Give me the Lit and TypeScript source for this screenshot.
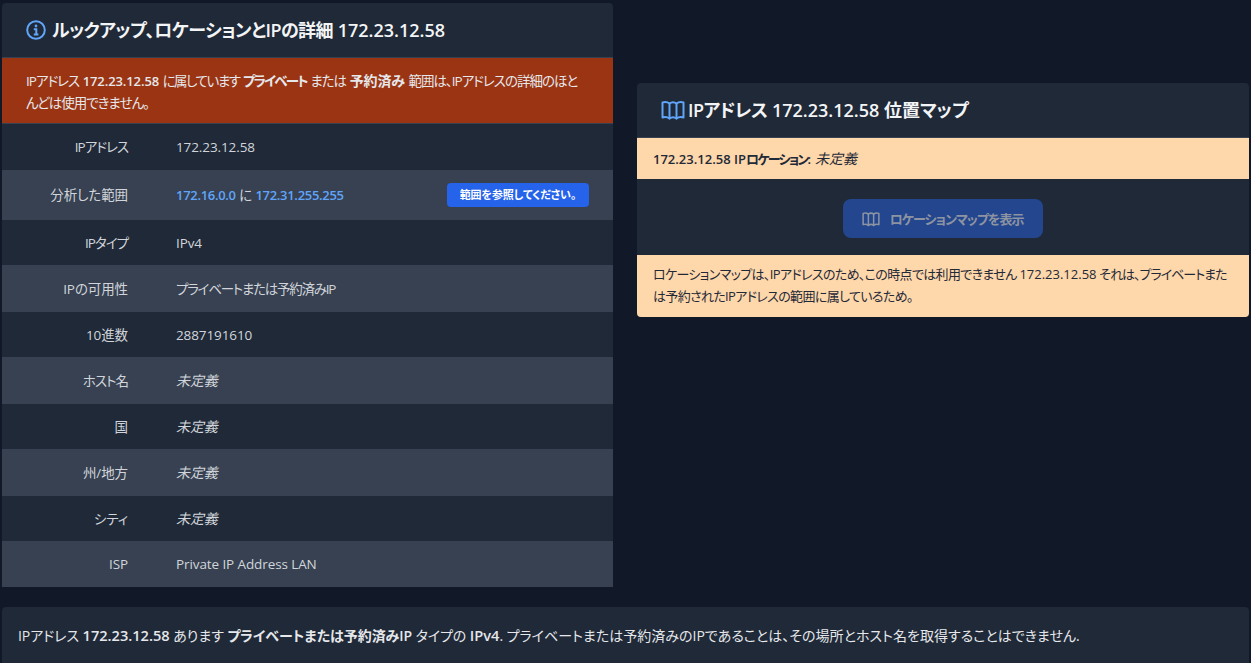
import { LitElement, html, css } from "lit";
import { customElement } from "lit/decorators.js";

const IP = "172.23.12.58";
const mapIcon = (cls: string) => html`<svg class=${cls} viewBox="0 0 24 24" fill="none" stroke="currentColor" stroke-width="2" stroke-linecap="round" stroke-linejoin="round"><path d="M8.500 5.500C6.500 4 4 3.800 1.500 4.500V19.500C4 18.800 6.500 19 8.500 20.500C10.500 19 13.500 19 15.500 20.500C17.500 19 20 18.800 22.500 19.500V4.500C20 3.800 17.500 4 15.500 5.500C13.500 4 10.500 4 8.500 5.500Z"/><path d="M8.500 5.500V20.500M15.500 5.500V20.500"/></svg>`;

@customElement("app-root")
export class AppRoot extends LitElement {
  static styles = css`
    :host { display: block; min-height: 663px; height: 663px; overflow: hidden; background: #111827; color: #e5e7eb;
      font-family: "Open Sans", "Noto Sans CJK JP", sans-serif; font-size: 14px; line-height: 20px; font-feature-settings: "palt"; }
    .page { display: flex; flex-direction: column; gap: 20px; padding: 3px 2px 0; }
    .cols { display: grid; grid-template-columns: 611px 612px; gap: 24px; align-items: start; }
    .card { background: #1f2937; border-radius: 4px; overflow: hidden; }
    .left { border-radius: 4px 4px 0 0; }
    .right { margin-top: 80px; }
    .head { display: flex; align-items: center; height: 55px; box-sizing: border-box; border-bottom: 1px solid #374151;
      font-size: 18px; font-weight: 600; color: #f3f4f6; white-space: nowrap; }
    .left .head { padding-left: 24px; gap: 6px; }
    .right .head { padding-left: 24px; gap: 3px; }
    .ico { width: 20px; height: 20px; color: #60a5fa; flex: none; }
    .mapico { width: 24px; height: 24px; color: #60a5fa; flex: none; }
    .kr { letter-spacing: -0.6px; }
    .k1 { letter-spacing: -1px; }
    .k12 { letter-spacing: -1.25px; }
    .k2 { letter-spacing: -1.5px; }
    .k3 { letter-spacing: -1.8px; }
    .kh { letter-spacing: -0.55px; }
    .n { letter-spacing: 0; }
    .alert { background: #9a3412; color: #e5e7eb; padding: 12px 24px; height: 66px; box-sizing: border-box; border-bottom: 1px solid #374151; font-size: 13.5px; line-height: 22px; white-space: nowrap; }
    .alert .n { font-size: 13px; letter-spacing: -0.1px; }
    .alert .kan { font-size: 14px; letter-spacing: -0.1px; }
    b { font-weight: 600; }
    .row { display: grid; grid-template-columns: 126px 1fr; column-gap: 48px; align-items: center; height: 45px; font-size: 13.5px; letter-spacing: -0.1px; }
    .row.alt { height: 47px; background: #374151; }
    .row.end { height: 46px; }
    .row.tall { height: 50px; }
    .label { text-align: right; color: #d1d5db; }
    .value { color: #d1d5db; display: flex; align-items: center; justify-content: space-between; padding-right: 24px; }
    .value i { font-style: italic; font-size: 14px; }
    .link { color: #60a5fa; font-weight: 600; font-size: 13px; letter-spacing: -0.3px; }
    .pill { background: #2563eb; color: #fff; font-size: 11px; font-weight: 700; line-height: 24px; height: 24px; width: 142px; text-align: center; border-radius: 4px; }
    .peach { background: #fed7aa; color: #1f2937; padding: 0 16px; font-size: 13px; letter-spacing: -0.65px; white-space: nowrap; }
    .peach.one { height: 41px; display: flex; align-items: center; gap: 4px; letter-spacing: 0; }
    .peach.two { padding: 8px 16px; line-height: 22px; height: 62px; box-sizing: border-box; }
    .peach i { font-style: italic; font-size: 14px; }
    .btnwrap { display: flex; justify-content: center; align-items: flex-start; height: 76px; padding-top: 20px; box-sizing: border-box; }
    .btn { width: 200px; height: 39px; margin-right: 1px; background: #23468f; border-radius: 8px; color: #8d94a1; display: flex; align-items: center; justify-content: center; gap: 10px; font-size: 13px; font-weight: 700; letter-spacing: -1px; }
    .btnico { width: 18px; height: 18px; }
    .bottom { padding: 0 16px 14px; height: 56px; display: flex; align-items: center; font-size: 14px; color: #e5e7eb; white-space: nowrap; letter-spacing: -0.07px; }
    .bottom b { font-weight: 600; }
    .bottom .n { font-size: 14.6px; }
    .bottom .wide { letter-spacing: 0.02px; }
  `;

  render() {
    const undef = html`<i>未定義</i>`;
    const rows: [unknown, unknown][] = [
      [html`<span class="k1">IPアドレス</span>`, IP],
      ["分析した範囲", html`<span><span class="link">172.16.0.0</span> に <span class="link">172.31.255.255</span></span><span class="pill">範囲を参照してください。</span>`],
      [html`<span class="k1">IPタイプ</span>`, "IPv4"],
      ["IPの可用性", html`<span class="k12">プライベートまたは予約済みIP</span>`],
      ["10進数", "2887191610"],
      [html`<span class="k1">ホスト名</span>`, undef],
      ["国", undef],
      ["州/地方", undef],
      ["シティ", undef],
      ["ISP", "Private IP Address LAN"],
    ];
    return html`<div class="page">
      <div class="cols">
        <section class="card left">
          <div class="head">
            <svg class="ico" viewBox="0 0 20 20" fill="none" stroke="currentColor"><circle cx="10" cy="10" r="8.800" stroke-width="2"/><circle cx="10" cy="6" r="1.400" fill="currentColor" stroke="none"/><path d="M7.800 9.300h2.500v5M7.800 14.600h4.600" stroke-width="2"/></svg>
            <span><span class="kh">ルックアップ、ロケーションとIPの詳細</span> ${IP}</span>
          </div>
          <div class="alert"><span class="k1">IPアドレス</span> <b class="n">${IP}</b> <span class="k2">に属しています</span> <b class="k3">プライベート</b> <span class="k1">または</span> <b class="kan">予約済み</b> <span class="k1">範囲は、IPアドレスの詳細のほと</span><br /><span class="k1">んどは使用できません。</span></div>
          ${rows.map(([k, v], i) => html`<div class="row ${i % 2 ? "alt" : ""} ${i === 1 ? "tall" : ""} ${i === 0 || i === 9 ? "end" : ""}"><div class="label">${k}</div><div class="value">${v}</div></div>`)}
        </section>
        <section class="card right">
          <div class="head">${mapIcon("mapico")}<span><span class="kr">IPアドレス</span> ${IP} 位置マップ</span></div>
          <div class="peach one"><b>${IP} IP<span class="k3">ロケーション</span>:</b> <i>未定義</i></div>
          <div class="btnwrap"><div class="btn">${mapIcon("btnico")}<span>ロケーションマップを表示</span></div></div>
          <div class="peach two">ロケーションマップは、IPアドレスのため、この時点では利用できません <span class="n">${IP}</span> <span class="k1">それは、プライベートまた</span><br />は予約されたIPアドレスの範囲に属しているため。</div>
        </section>
      </div>
      <section class="card bottom"><span>IPアドレス <b class="n">${IP}</b> あります <b>プライベートまたは予約済みIP</b> タイプの <b class="n">IPv4</b>. <span class="wide">プライベートまたは予約済みのIPであることは、その場所とホスト名を取得することはできません.</span></span></section>
    </div>`;
  }
}
